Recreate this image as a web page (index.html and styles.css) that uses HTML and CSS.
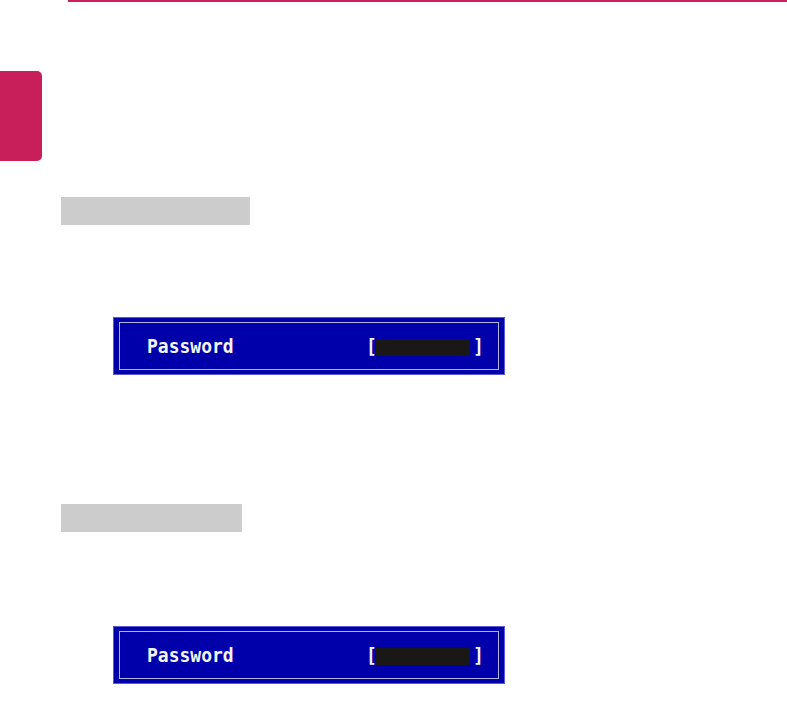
FILE: index.html
```html
<!DOCTYPE html>
<html>
<head>
<meta charset="utf-8">
<link rel="stylesheet" href="styles.css">
</head>
<body>
<div class="page">
  <div class="top-rule"></div>
  <div class="side-tab"></div>
  <section class="step step-first">
    <div class="label-bar label-bar-wide"></div>
    <div class="bios-box">
      <div class="bios-frame">
        <span class="bios-label">Password</span>
        <span class="bios-field"><span class="bracket">[</span><span class="field-mask"></span><span class="bracket">]</span></span>
      </div>
    </div>
  </section>
  <section class="step step-second">
    <div class="label-bar label-bar-narrow"></div>
    <div class="bios-box">
      <div class="bios-frame">
        <span class="bios-label">Password</span>
        <span class="bios-field"><span class="bracket">[</span><span class="field-mask"></span><span class="bracket">]</span></span>
      </div>
    </div>
  </section>
</div>
</body>
</html>
```

FILE: styles.css
```css
html, body {
  margin: 0;
  padding: 0;
  background: #ffffff;
}

.page {
  width: 787px;
  height: 715px;
  overflow: hidden;
  display: flex;
  flex-direction: column;
}

.top-rule {
  margin-left: 68px;
  height: 2px;
  background: #cc1f5e;
}

.side-tab {
  margin-top: 69px;
  width: 42px;
  height: 90px;
  background: #c81e5a;
  border-radius: 0 5px 5px 0;
}

.step {
  display: flex;
  flex-direction: column;
  align-items: flex-start;
}

.step-first {
  margin-top: 36px;
}

.step-second {
  margin-top: 129px;
}

.label-bar {
  margin-left: 61px;
  height: 28px;
  background: #cccccc;
}

.label-bar-wide {
  width: 189px;
}

.label-bar-narrow {
  width: 181px;
}

.bios-box {
  box-sizing: border-box;
  margin-left: 113px;
  width: 392px;
  height: 58px;
  background: #0000aa;
  border: 1px solid #5a5ad6;
  padding: 4px 5px;
  display: flex;
}

.step-first .bios-box {
  margin-top: 92px;
}

.step-second .bios-box {
  margin-top: 94px;
}

.bios-frame {
  flex: 1;
  border: 1px solid #b4b4dc;
  display: flex;
  align-items: center;
  justify-content: space-between;
  padding: 0 18px 0 27px;
}

.bios-label,
.bracket {
  font-family: "DejaVu Sans Mono", "Liberation Mono", monospace;
  font-weight: bold;
  font-size: 18px;
  line-height: 20px;
  color: #f4f4f4;
  transform: scaleY(1.12);
}

.bios-field {
  display: flex;
  align-items: center;
}

.bracket {
  width: 7px;
  display: inline-block;
  text-align: center;
}

.field-mask {
  width: 94px;
  height: 17px;
  margin: 2px 3px 0 3px;
  background: #1a1717;
}
```
